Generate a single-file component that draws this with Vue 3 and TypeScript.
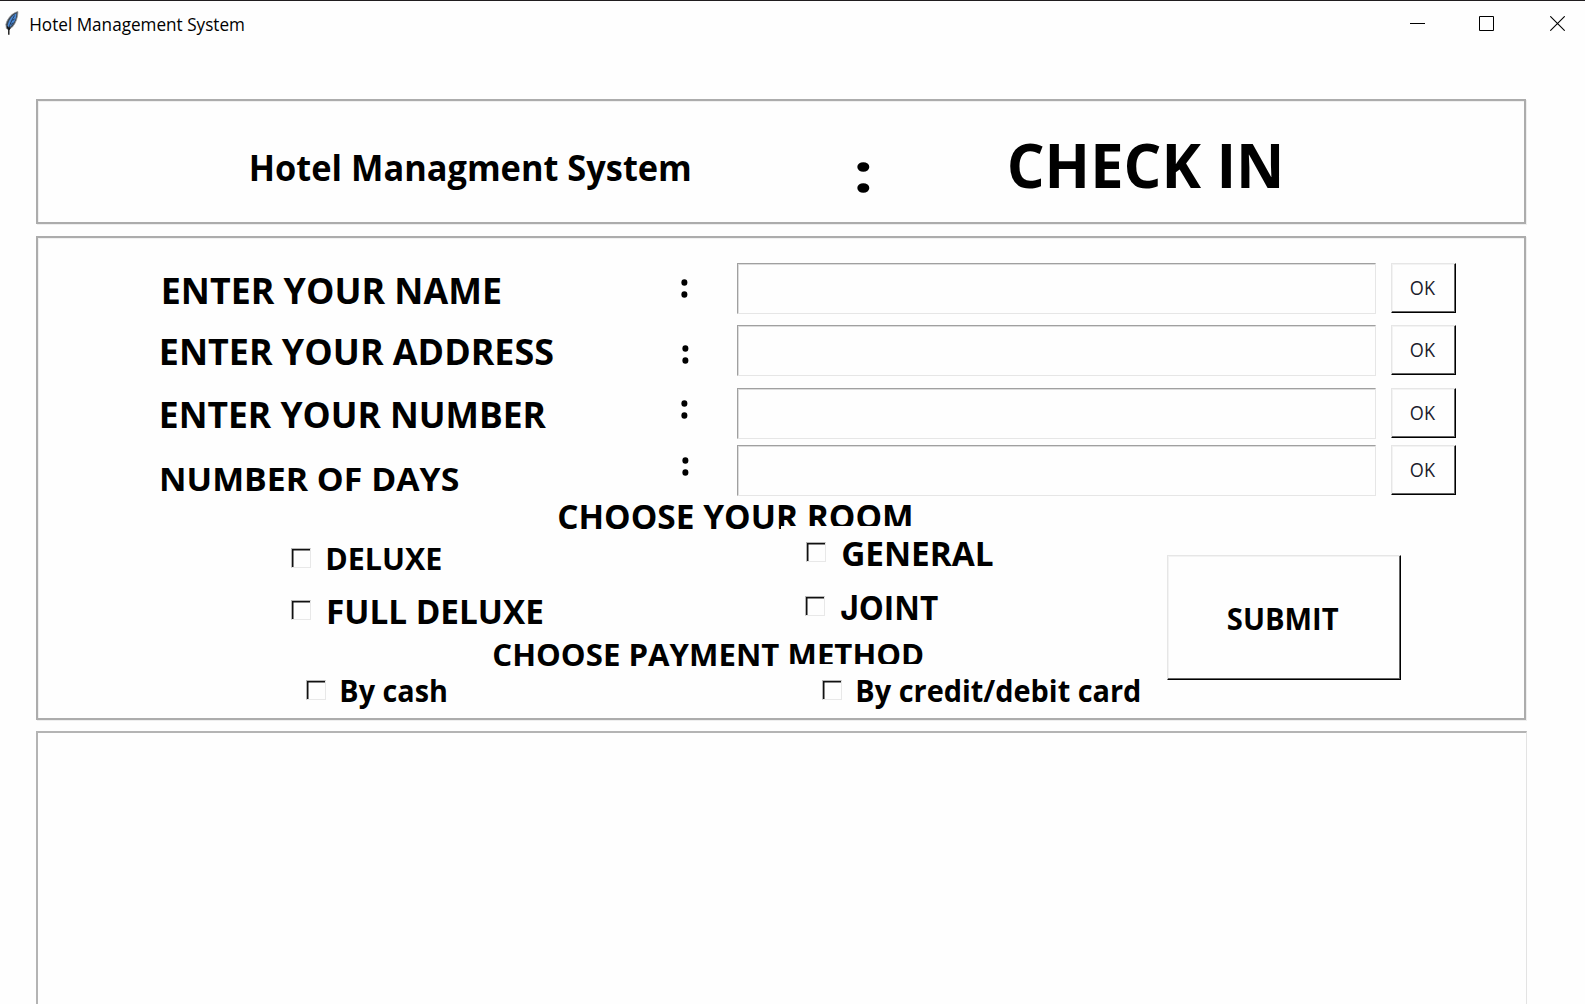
<script setup lang="ts">
import { h, type FunctionalComponent } from 'vue'

interface CaptionProps {
  text: string
  width: number
  size: number
  cap: number
  left?: number
  right?: number
  weight?: number
}

// One line of text whose box is exactly its capital-letter box.
const Caption: FunctionalComponent<CaptionProps> = (p) => {
  const l = (p.left ?? 0.09) * p.size
  const r = (p.right ?? 0.04) * p.size
  const content = p.text.startsWith('J')
    ? [h('tspan', { 'font-family': 'Inter' }, 'J'), p.text.slice(1)]
    : p.text
  return h(
    'svg',
    { width: p.width, height: p.cap, style: 'display:block;overflow:visible;flex:none' },
    [
      h(
        'text',
        {
          x: -l,
          y: p.cap,
          'font-size': p.size,
          'font-weight': p.weight ?? 700,
          textLength: p.width + l + r,
          lengthAdjust: 'spacingAndGlyphs',
          fill: 'currentColor',
        },
        content,
      ),
    ],
  )
}
Caption.props = ['text', 'width', 'size', 'cap', 'left', 'right', 'weight']

const fields = [
  { text: 'ENTER YOUR NAME', width: 336.5, size: 35.5, cap: 25.5, right: 0.04, gap: 0, x: 2, y: 14.5, cx: 0, cy: 15.5 },
  { text: 'ENTER YOUR ADDRESS', width: 390.5, size: 35.5, cap: 25.5, right: 0.04, gap: 12, x: 0.6, y: 14.2, cx: 1, cy: 19.5 },
  { text: 'ENTER YOUR NUMBER', width: 384, size: 35.5, cap: 25.5, right: 0, gap: 13, x: 0.6, y: 14.2, cx: 0, cy: 12 },
  { text: 'NUMBER OF DAYS', width: 296, size: 33, cap: 23.7, right: 0.04, gap: 7, x: 0.4, y: 22.2, cx: 1, cy: 12 },
]
</script>

<template>
  <div class="window">
    <header class="titlebar">
      <svg class="feather" width="16" height="26" viewBox="0 0 16 26">
        <path d="M14 1.6C9 2.4 3.2 8 1.8 14.5l.6 4 2 1.2 4.1-2.7c3.4-4 5.4-9.3 5.5-15.4z" fill="#3a4654" stroke="#9a9a9a" stroke-width=".7" />
        <path d="M12.4 3.2C7.4 6 4.4 10.5 3.6 16.2l1.9 1c4.2-3.3 6.9-8 6.9-14z" fill="#4b8bd8" />
        <path d="M10.5 5.5C7.8 10 6 14 4.8 18.5M9.3 12.6l-2.3 2M10.6 9l-2 1.4" fill="none" stroke="#1c2f4c" stroke-width=".9" />
        <path d="M3.2 16.5l1.6 3v5.2M6 17.6l-1.2 2.6" fill="none" stroke="#151515" stroke-width="1.4" />
      </svg>
      <Caption text="Hotel Management System" :width="212.5" :size="18.2" :cap="13" :weight="400" :left="0.1" :right="0.08" />
      <div class="controls">
        <svg width="15" height="15"><path d="M0 7.5h15" stroke="#000" /></svg>
        <svg width="15" height="15"><path d="M.5.5h14v14H.5z" fill="none" stroke="#000" /></svg>
        <svg width="15" height="15"><path d="M.3.3l14.4 14.4M14.7.3L.3 14.7" stroke="#000" stroke-width="1.1" /></svg>
      </div>
    </header>

    <section class="panel banner">
      <Caption class="name" text="Hotel Managment System" :width="437" :size="35.5" :cap="26" :right="0.08" />
      <svg class="big-colon" width="13" height="31"><ellipse cx="6.3" cy="5" rx="6" ry="4.8" /><ellipse cx="6.3" cy="26" rx="6" ry="4.8" /></svg>
      <Caption class="mode" text="CHECK IN" :width="269" :size="61" :cap="43.6" :left="0.055" :right="0.09" />
    </section>

    <section class="panel form">
      <div v-for="f in fields" :key="f.text" class="field" :style="{ marginTop: f.gap + 'px' }">
        <div class="label">
          <Caption :text="f.text" :width="f.width" :size="f.size" :cap="f.cap" :right="f.right" :style="{ margin: `${f.y}px 0 0 ${f.x}px` }" />
        </div>
        <div class="colon">
          <svg width="8" height="19" :style="{ margin: `${f.cy}px 0 0 ${f.cx}px` }"><ellipse cx="3.4" cy="3.5" rx="3" ry="3.2" /><ellipse cx="3.4" cy="15.5" rx="3" ry="3.2" /></svg>
        </div>
        <input class="entry" type="text" />
        <button class="raised ok"><Caption text="OK" :width="24" :size="19.4" :cap="14" :weight="400" :left="0.06" :right="0" /></button>
      </div>

      <div class="lower">
        <div class="choices">
          <Caption class="room-title" text="CHOOSE YOUR ROOM" :width="351.5" :size="33.5" :cap="24" :left="0.055" :right="0.09" />
          <div class="columns rooms">
            <div class="left">
              <label class="option deluxe"><i class="box" /><Caption text="DELUXE" :width="113" :size="31" :cap="22.3" /></label>
              <label class="option full"><i class="box" /><Caption text="FULL DELUXE" :width="213.5" :size="33.5" :cap="24" /></label>
            </div>
            <div class="right">
              <label class="option general"><i class="box" /><Caption text="GENERAL" :width="150" :size="33.5" :cap="24" :left="0.055" :right="0.02" /></label>
              <label class="option joint"><i class="box" /><Caption text="JOINT" :width="96.5" :size="33.5" :cap="23.7" :left="0.02" :right="0.02" /></label>
            </div>
          </div>
          <Caption class="pay-title" text="CHOOSE PAYMENT METHOD" :width="428.5" :size="31" :cap="22" :left="0.055" :right="0.055" />
          <div class="columns payments">
            <div class="left">
              <label class="option cash"><i class="box" /><Caption text="By cash" :width="103.5" :size="29.5" :cap="21" :right="0.08" /></label>
            </div>
            <div class="right">
              <label class="option card"><i class="box" /><Caption text="By credit/debit card" :width="281" :size="29.5" :cap="21" :right="0.08" /></label>
            </div>
          </div>
        </div>
        <button class="raised submit"><Caption text="SUBMIT" :width="110" :size="29.5" :cap="21" :left="0.04" :right="0.02" /></button>
      </div>
    </section>

    <section class="output" />
  </div>
</template>

<style>
body {
  margin: 0;
  background: #fff;
}
</style>

<style scoped>
.window {
  box-sizing: border-box;
  width: 1585px;
  height: 1004px;
  overflow: hidden;
  border-top: 1px solid #201d1f;
  background: #fefefe;
  color: #000;
  font-family: "Open Sans", "Noto Sans", sans-serif;
  display: flex;
  flex-direction: column;
}
.titlebar {
  height: 98px;
  flex: none;
  display: flex;
  align-items: flex-start;
  padding: 17px 13px 0 4px;
  box-sizing: border-box;
}
.feather {
  margin: -8px 10.6px 0 0;
}
.controls {
  margin: -2px 7px 0 auto;
  display: flex;
}
.controls svg + svg {
  margin-left: 54px;
}
.controls svg:last-child {
  margin-left: 56px;
}
.panel {
  box-sizing: border-box;
  flex: none;
  width: 1490px;
  margin-left: 36px;
  border: 2px solid #acacac;
  box-shadow: 1px 1px 0 #eee, inset 1px 1px 0 #f0f0f0;
}
.banner {
  height: 125px;
  display: flex;
  align-items: flex-start;
}
.name {
  margin: 53.8px 0 0 213.8px;
}
.big-colon {
  flex: none;
  margin: 61px 0 0 168.5px;
}
.mode {
  margin: 42.5px 0 0 139.5px;
}
.form {
  height: 484px;
  margin-top: 12px;
  padding-top: 25px;
}
.field {
  height: 50px;
  display: flex;
  align-items: flex-start;
  padding-left: 123.5px;
}
.label {
  width: 519.5px;
  flex: none;
}
.colon {
  width: 56px;
  flex: none;
}
.colon svg {
  display: block;
}
.entry {
  box-sizing: border-box;
  width: 639px;
  height: 51px;
  flex: none;
  padding: 0 8px;
  border: 1px solid;
  border-color: #a0a0a0 #e6e6e6 #e6e6e6 #a0a0a0;
  box-shadow: inset 1px 1px 0 #dcdcdc;
  background: transparent;
  outline: none;
  border-radius: 0;
}
.raised {
  box-sizing: border-box;
  flex: none;
  display: flex;
  justify-content: center;
  align-items: flex-start;
  padding: 0;
  border: 1px solid;
  border-color: #e6e6e6 #000 #000 #e6e6e6;
  box-shadow: inset -1px -1px 0 #666, inset 1px 1px 0 #f3f3f3;
  background: transparent;
  font-family: inherit;
  color: #000;
  border-radius: 0;
}
.ok {
  width: 65px;
  height: 50px;
  margin-left: 15px;
  padding: 17px 1px 0 0;
  color: #1c1c2c;
}
.lower {
  display: flex;
  align-items: flex-start;
}
.choices {
  width: 1129px;
  height: 220px;
  flex: none;
}
.room-title {
  margin: 9.5px 0 0 521px;
}
.pay-title {
  margin: 0.7px 0 0 456px;
}
.columns {
  display: flex;
  align-items: flex-start;
}
.left {
  width: 743px;
  flex: none;
}
.right {
  position: relative;
  flex: 1;
  background: #fefefe;
}
.rooms {
  height: 115px;
}
.rooms .right {
  height: 100px;
  margin-top: -2.5px;
}
.payments .right {
  height: 45px;
  margin-top: -2px;
}
.option {
  display: flex;
  align-items: flex-start;
}
.box {
  box-sizing: border-box;
  width: 20px;
  height: 20px;
  flex: none;
  border: 1px solid;
  border-color: #b4b4b4 #e8e8e8 #e8e8e8 #b4b4b4;
  box-shadow: inset 1.5px 1.5px 0 #111;
}
.deluxe {
  padding: 19.5px 0 0 253px;
}
.deluxe .box {
  margin-right: 16.5px;
}
.full {
  padding: 30px 0 0 253px;
}
.full .box {
  margin-right: 18px;
}
.general {
  padding: 16px 0 0 25px;
}
.general .box {
  margin-right: 17px;
}
.joint {
  padding: 30px 0 0 23.5px;
}
.joint .box {
  margin-right: 16px;
}
.cash {
  padding: 14px 0 0 268px;
}
.cash .box {
  margin-right: 16px;
}
.card {
  padding: 16px 0 0 41px;
}
.card .box {
  margin-right: 15.5px;
}
.cash svg,
.card svg {
  margin-top: 1.3px;
}
.submit {
  width: 234px;
  height: 125px;
  margin-top: 59.5px;
  padding: 53.7px 2px 0 0;
}
.output {
  box-sizing: border-box;
  width: 1491px;
  margin: 11px 0 -10px 36px;
  flex: 1;
  border: 2px solid #b4b4b4;
  border-right: 1px solid #e3e3e3;
}
</style>
